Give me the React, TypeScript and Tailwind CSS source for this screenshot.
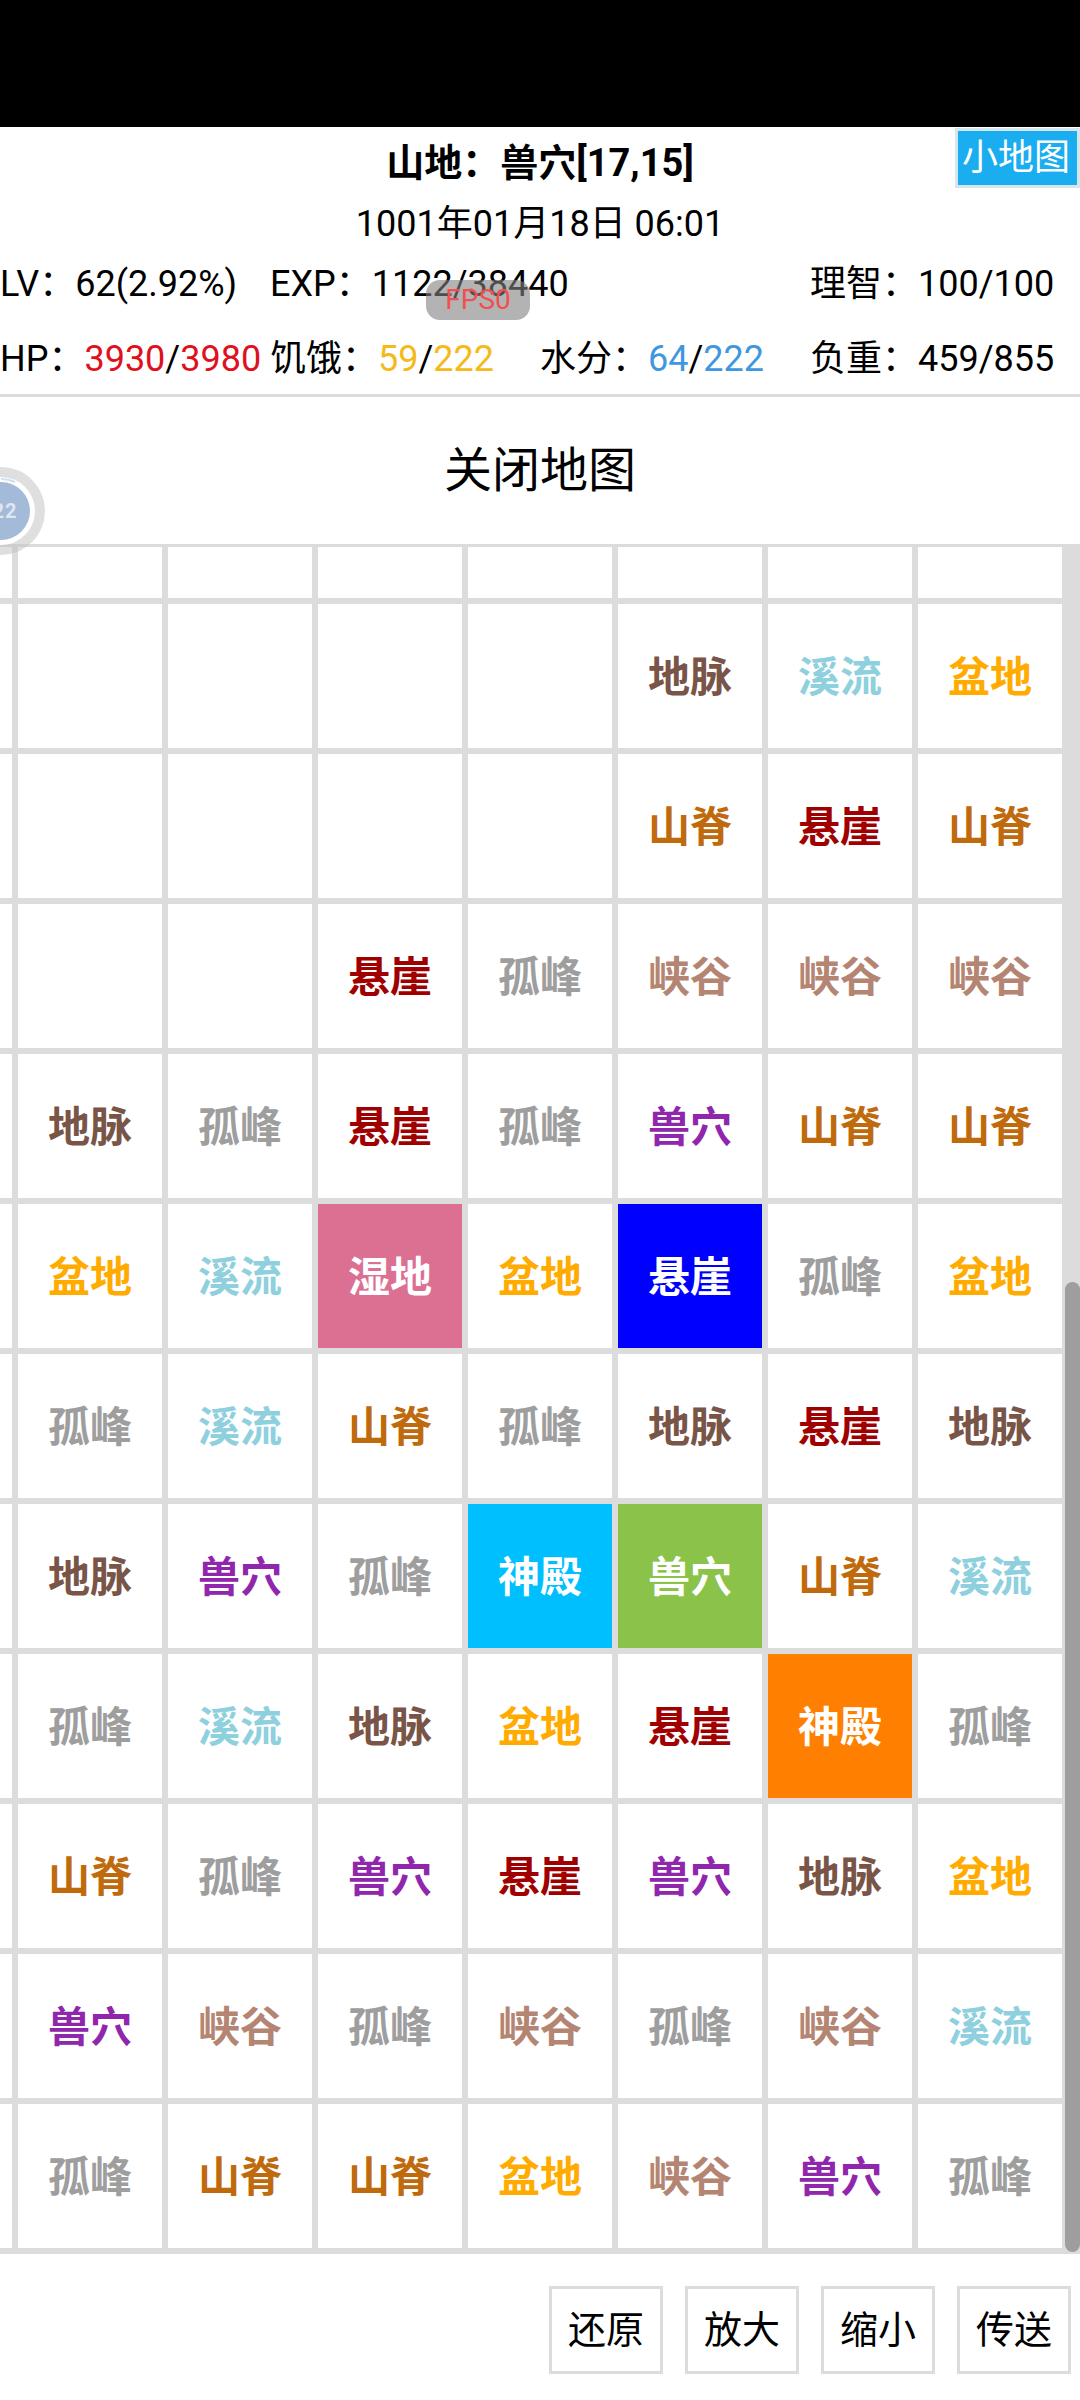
import React from 'react';

const font = { fontFamily: '"Roboto", "Noto Sans CJK SC", sans-serif' };

// 地形 -> 文字颜色
const terrainColors: Record<string, string> = {
  地脉: 'text-[#795548]',
  溪流: 'text-[#8fd0de]',
  盆地: 'text-[#ffab00]',
  山脊: 'text-[#bf6a0c]',
  悬崖: 'text-[#a00000]',
  孤峰: 'text-[#9e9e9e]',
  峡谷: 'text-[#b58573]',
  兽穴: 'text-[#9026ab]',
};

type Cell = string | { name: string; bg: string };

const rows: Cell[][] = [
  ['', '', '', '', '地脉', '溪流', '盆地'],
  ['', '', '', '', '山脊', '悬崖', '山脊'],
  ['', '', '悬崖', '孤峰', '峡谷', '峡谷', '峡谷'],
  ['地脉', '孤峰', '悬崖', '孤峰', '兽穴', '山脊', '山脊'],
  ['盆地', '溪流', { name: '湿地', bg: 'bg-[#db7093]' }, '盆地', { name: '悬崖', bg: 'bg-[#0000ff]' }, '孤峰', '盆地'],
  ['孤峰', '溪流', '山脊', '孤峰', '地脉', '悬崖', '地脉'],
  ['地脉', '兽穴', '孤峰', { name: '神殿', bg: 'bg-[#00bfff]' }, { name: '兽穴', bg: 'bg-[#8bc34a]' }, '山脊', '溪流'],
  ['孤峰', '溪流', '地脉', '盆地', '悬崖', { name: '神殿', bg: 'bg-[#ff8000]' }, '孤峰'],
  ['山脊', '孤峰', '兽穴', '悬崖', '兽穴', '地脉', '盆地'],
  ['兽穴', '峡谷', '孤峰', '峡谷', '孤峰', '峡谷', '溪流'],
  ['孤峰', '山脊', '山脊', '盆地', '峡谷', '兽穴', '孤峰'],
];

function MapCell({ cell }: { cell: Cell }) {
  if (typeof cell === 'string') {
    return (
      <div className={`flex items-center justify-center bg-white pt-[2px] text-[42px] font-bold ${terrainColors[cell] ?? ''}`}>
        {cell}
      </div>
    );
  }
  return (
    <div className={`flex items-center justify-center pt-[2px] text-[42px] font-bold text-white ${cell.bg}`}>
      {cell.name}
    </div>
  );
}

function Stat({ label, children }: { label: string; children: React.ReactNode }) {
  return (
    <div className="whitespace-nowrap">
      {label}：{children}
    </div>
  );
}

export default function App() {
  return (
    <div className="relative flex h-[2400px] w-[1080px] flex-col overflow-hidden bg-white text-[36px] text-black" style={font}>
      <div className="h-[127px] bg-black" />

      <header className="flex h-[270px] flex-col border-b-[3px] border-[#dcdcdc]">
        <div className="flex h-[70px] items-center justify-center pt-[2px] text-[38px] font-bold">山地：兽穴[17,15]</div>
        <div className="flex h-[52px] items-center justify-center pt-[1px]">1001年01月18日 06:01</div>
        <div className="mt-[5px] grid h-[60px] grid-cols-4 items-center">
          <Stat label="LV">62(2.92%)</Stat>
          <div className="col-span-2"><Stat label="EXP">1122/38440</Stat></div>
          <Stat label="理智">100/100</Stat>
        </div>
        <div className="mt-[15px] grid h-[60px] grid-cols-4 items-center">
          <Stat label="HP">
            <span className="text-[#e0101c]">3930</span>/<span className="text-[#e0101c]">3980</span>
          </Stat>
          <Stat label="饥饿">
            <span className="text-[#f5b91a]">59</span>/<span className="text-[#f5b91a]">222</span>
          </Stat>
          <Stat label="水分">
            <span className="text-[#3f97e0]">64</span>/<span className="text-[#3f97e0]">222</span>
          </Stat>
          <Stat label="负重">459/855</Stat>
        </div>
      </header>

      <div className="flex h-[147px] items-center justify-center text-[48px]">关闭地图</div>

      <div className="flex h-[1710px]">
        <div className="grid h-full w-[1062px] grid-cols-[12px_repeat(7,144px)] grid-rows-[51px_repeat(11,144px)] gap-[6px] overflow-hidden border-t-[3px] border-b-[6px] border-[#dcdcdc] bg-[#dcdcdc]">
          {Array.from({ length: 8 }).map((_, i) => (
            <div key={i} className="bg-white" />
          ))}
          {rows.map((row, r) => (
            <React.Fragment key={r}>
              <div className="bg-white" />
              {row.map((cell, c) => (
                <MapCell key={c} cell={cell} />
              ))}
            </React.Fragment>
          ))}
        </div>
        <div className="flex w-[18px] flex-col bg-[#dcdcdc] pt-[738px] pb-[2px]">
          <div className="ml-[3px] w-[15px] flex-1 rounded-full bg-[#9e9e9e]" />
        </div>
      </div>

      <div className="flex justify-end gap-[22px] pt-[32px] pr-[9px]">
        {['还原', '放大', '缩小', '传送'].map((label) => (
          <button key={label} className="flex h-[88px] w-[114px] items-center justify-center border-[3px] border-[#dcdcdc] text-[38px]">
            {label}
          </button>
        ))}
      </div>

      {/* 悬浮层 */}
      <div className="absolute top-[128px] left-[955px] flex h-[60px] w-[125px] items-center justify-center border-[3px] border-[#d4e6ee] bg-[#1aadf0] pr-[3px] text-[36px] text-white">
        小地图
      </div>
      <div className="absolute top-[280px] left-[426px] flex h-[40px] w-[104px] items-center justify-center rounded-[14px] bg-[#808080]/60 text-[28px] text-[#f05050]">
        FPS0
      </div>
      <div className="absolute top-[467px] left-[-43px] flex h-[88px] w-[88px] items-center justify-center rounded-full border-[10px] border-[#c0c0c0]/50 bg-white bg-clip-padding">
        <div className="flex h-[58px] w-[58px] items-center justify-center rounded-full bg-[#a3bbd9] pl-[8px] text-[20px] font-bold tracking-[1px] text-[#dfe7f2]">
          22
        </div>
        <svg className="absolute top-[-10px] left-[-10px] h-[88px] w-[88px]" viewBox="0 0 88 88" fill="none">
          <path d="M44 12 A32 32 0 0 1 58 15" stroke="#cfe0f2" strokeWidth="2" />
        </svg>
      </div>
    </div>
  );
}
